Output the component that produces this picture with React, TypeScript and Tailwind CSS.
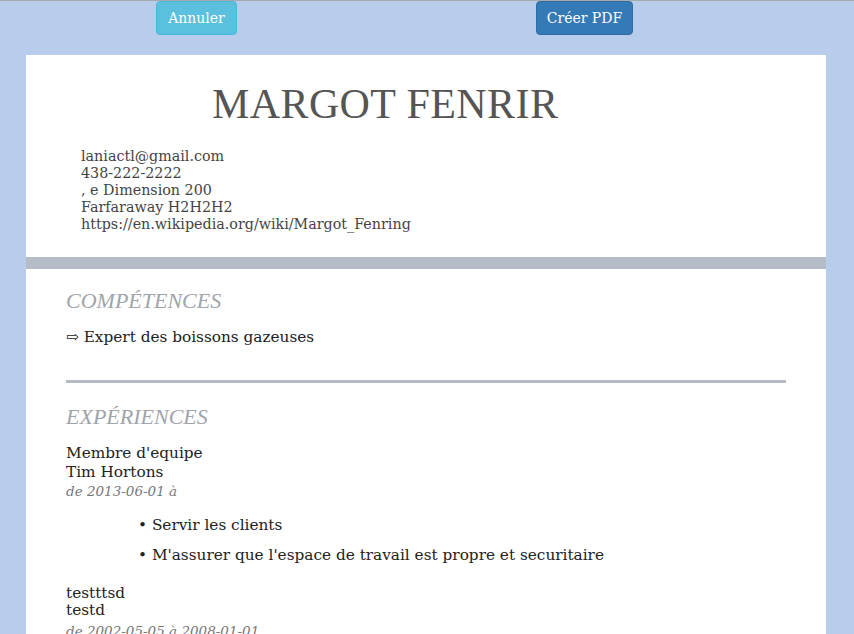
export default function App() {
  const serif = { fontFamily: '"DejaVu Serif", Georgia, serif' };
  const lib = { fontFamily: '"Liberation Serif", serif' };
  return (
    <div className="min-h-[634px] bg-[#b8ccec] border-t border-[#a9a9b0] overflow-hidden" style={serif}>
      <div className="flex h-[54px] items-start">
        <button className="ml-[156px] h-[34px] w-[81px] rounded-[4px] border border-[#46b8da] bg-[#5bc0de] text-[14px] text-white">
          Annuler
        </button>
        <button className="ml-[299px] h-[34px] w-[97px] rounded-[4px] border border-[#2e6da4] bg-[#337ab7] text-[14px] text-white">
          Créer PDF
        </button>
      </div>

      <div className="ml-[26px] w-[800px] bg-white">
        <header className="h-[202px] pt-[24px]">
          <h1 className="pl-[186px] text-[42px] leading-[50px] tracking-[0.4px] text-[#555555]" style={lib}>
            MARGOT FENRIR
          </h1>
          <div className="mt-[19px] pl-[55px] text-[14.3px] leading-[17px] text-[#444]">
            <div>laniactl@gmail.com</div>
            <div>438-222-2222</div>
            <div>, e Dimension 200</div>
            <div>Farfaraway H2H2H2</div>
            <div>https://en.wikipedia.org/wiki/Margot_Fenring</div>
          </div>
        </header>
        <div className="h-[12px] bg-[#b4bcc6]" />

        <div className="px-[40px]">
          <section className="pt-[20px]">
            <h2 className="text-[22px] leading-[24px] italic text-[#a0a4ab]" style={lib}>
              COMPÉTENCES
            </h2>
            <p className="mt-[14px] text-[15.3px] leading-[20px] text-[#222]">⇨ Expert des boissons gazeuses</p>
          </section>
          <div className="mt-[33px] h-[3px] bg-[#b4bcc6]" />

          <section className="pt-[21px]">
            <h2 className="text-[22px] leading-[26px] italic text-[#a0a4ab]" style={lib}>
              EXPÉRIENCES
            </h2>
            <div className="mt-[14px] text-[15.3px] leading-[18.5px] text-[#222]">
              <div>Membre d'equipe</div>
              <div>Tim Hortons</div>
              <div className="mt-[1px] text-[13.5px] italic text-[#777]">de 2013-06-01 à</div>
              <ul className="mt-[9px] pl-[72px]">
                <li className="py-[6px]">• Servir les clients</li>
                <li className="py-[6px]">• M'assurer que l'espace de travail est propre et securitaire</li>
              </ul>
              <div className="mt-[14px] leading-[17.5px]">testttsd</div>
              <div className="leading-[17.5px]">testd</div>
              <div className="mt-[2px] text-[13.5px] italic text-[#777]">de 2002-05-05 à 2008-01-01</div>
            </div>
          </section>
        </div>
      </div>
    </div>
  );
}
